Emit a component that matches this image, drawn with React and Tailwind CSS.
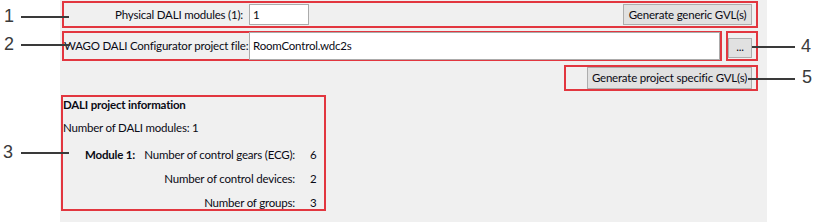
import React from "react";

const F = "font-['Lato','Liberation_Sans',sans-serif]";

function Callout({ n, top, left, lineLeft, lineWidth, lineTop }) {
  return (
    <>
      <div
        className="absolute text-[18px] leading-[20px] text-[#3a3a3a] font-['Liberation_Sans',sans-serif] font-light"
        style={{ top, left }}
      >
        {n}
      </div>
      <div
        className="absolute h-[1.5px] bg-[#3a3a3a]"
        style={{ top: lineTop, left: lineLeft, width: lineWidth }}
      />
    </>
  );
}

export default function App() {
  return (
    <div className={`relative w-[815px] h-[222px] bg-white flex text-[11.5px] tracking-[-0.2px] leading-[16px] text-[#0a0a14] ${F}`}>
      <div className="w-[60px] shrink-0" />
      <div className="w-[707px] h-[222px] bg-[#f0f0f0] pl-[2px] pt-[1px] flex flex-col">
        {/* Box 1 */}
        <div className="w-[696px] h-[27px] border-2 border-[#e2363f] flex items-center">
          <div className="w-[179px] text-right whitespace-nowrap">Physical DALI modules (1):</div>
          <div className="ml-[6px] w-[60px] h-[21px] bg-white border border-[#ababab] flex items-center px-[3px]">1</div>
          <button className="ml-auto mr-[4px] w-[129px] h-[21px] bg-[#e1e1e1] border border-[#adadad] flex items-center justify-center whitespace-nowrap">
            Generate generic GVL(s)
          </button>
        </div>
        {/* Row 2 */}
        <div className="mt-[3px] flex">
          <div className="w-[660px] h-[30px] border-2 border-[#e2363f] flex items-center">
            <div className="w-[185px] shrink-0 whitespace-nowrap">WAGO DALI Configurator project file:</div>
            <div className="w-[471px] h-[28px] bg-white border border-[#ababab] flex items-center px-[3px]">RoomControl.wdc2s</div>
          </div>
          <div className="ml-[4px] w-[32px] h-[30px] border-2 border-[#e2363f] flex items-end pb-[1px]">
            <button className="w-[24px] h-[20px] bg-[#e1e1e1] border border-[#adadad] flex items-center justify-center leading-[12px] pb-[2px]">
              ...
            </button>
          </div>
        </div>
        {/* Box 5 */}
        <div className="mt-[4px] ml-[502px] w-[194px] h-[26px] border-2 border-[#e2363f] flex items-center justify-end pr-[4px]">
          <button className="w-[165px] h-[22px] bg-[#e1e1e1] border border-[#adadad] flex items-center justify-center whitespace-nowrap">
            Generate project specific GVL(s)
          </button>
        </div>
        {/* Box 3 */}
        <div className="mt-[4px] ml-[-1px] w-[265px] h-[116px] border-2 border-[#e2363f]">
          <div className="font-bold h-[16px] whitespace-nowrap">DALI project information</div>
          <div className="mt-[7px] h-[16px] whitespace-nowrap">Number of DALI modules: 1</div>
          <div className="mt-[11px] grid grid-cols-[72px_160px_auto] gap-y-[8px]">
            <div className="text-right font-bold whitespace-nowrap">Module 1:</div>
            <div className="text-right whitespace-nowrap">Number of control gears (ECG):</div>
            <div className="pl-[15px]">6</div>
            <div />
            <div className="text-right whitespace-nowrap">Number of control devices:</div>
            <div className="pl-[15px]">2</div>
            <div />
            <div className="text-right whitespace-nowrap">Number of groups:</div>
            <div className="pl-[15px]">3</div>
          </div>
        </div>
      </div>

      <Callout n="1" top={6} left={4} lineTop={16} lineLeft={21} lineWidth={48} />
      <Callout n="2" top={34} left={4} lineTop={44} lineLeft={21} lineWidth={49} />
      <Callout n="3" top={142} left={3} lineTop={152} lineLeft={21} lineWidth={48} />
      <Callout n="4" top={36} left={801} lineTop={46} lineLeft={752} lineWidth={43} />
      <Callout n="5" top={67} left={802} lineTop={78} lineLeft={748} lineWidth={47} />
    </div>
  );
}
